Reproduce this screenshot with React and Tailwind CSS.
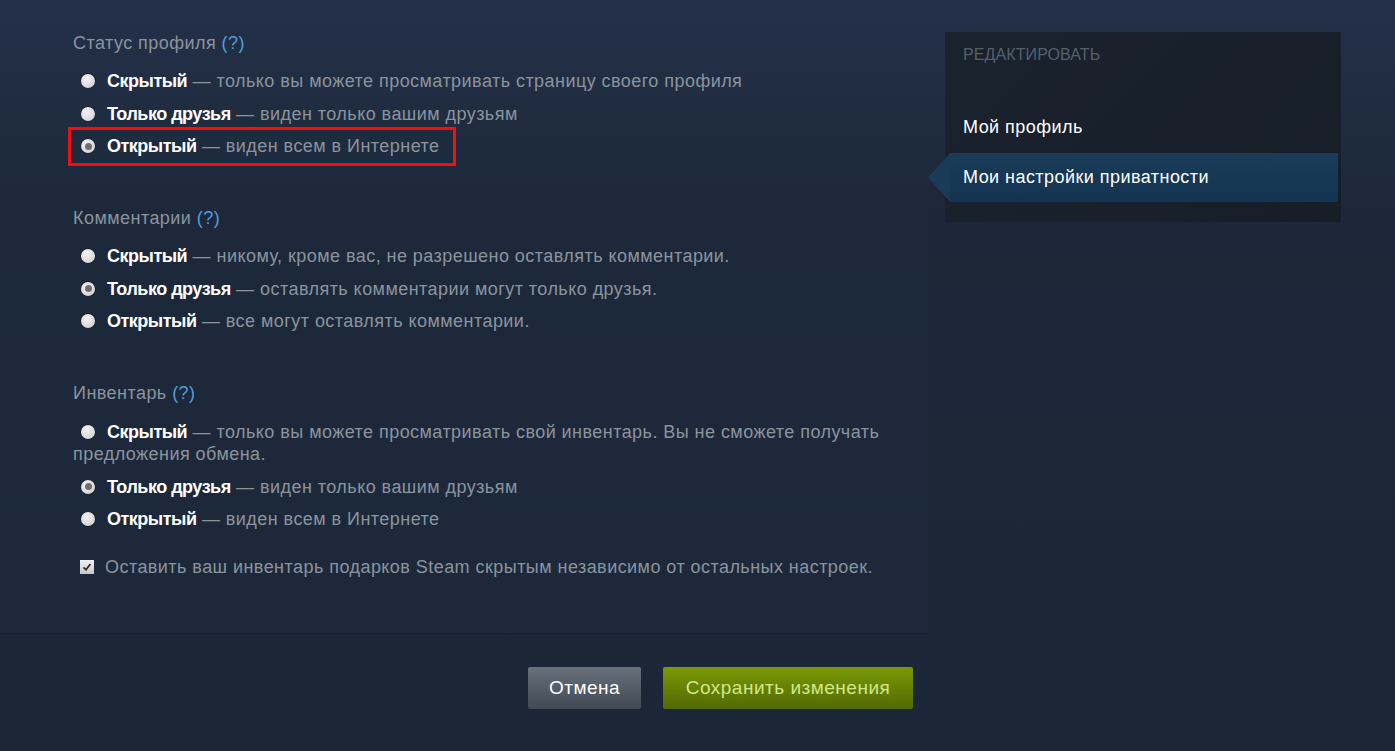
import React from 'react';

const sections = [
  {
    title: 'Статус профиля',
    options: [
      { label: 'Скрытый', desc: 'только вы можете просматривать страницу своего профиля' },
      { label: 'Только друзья', desc: 'виден только вашим друзьям' },
      { label: 'Открытый', desc: 'виден всем в Интернете', checked: true, marked: true },
    ],
  },
  {
    title: 'Комментарии',
    options: [
      { label: 'Скрытый', desc: 'никому, кроме вас, не разрешено оставлять комментарии.' },
      { label: 'Только друзья', desc: 'оставлять комментарии могут только друзья.', checked: true },
      { label: 'Открытый', desc: 'все могут оставлять комментарии.' },
    ],
  },
  {
    title: 'Инвентарь',
    options: [
      { label: 'Скрытый', desc: 'только вы можете просматривать свой инвентарь. Вы не сможете получать предложения обмена.' },
      { label: 'Только друзья', desc: 'виден только вашим друзьям', checked: true },
      { label: 'Открытый', desc: 'виден всем в Интернете' },
    ],
  },
];

function Radio({ checked }) {
  return (
    <span className="relative -top-[1px] ml-[8px] mr-[12px] inline-block h-[14px] w-[14px] rounded-full bg-[radial-gradient(circle_at_40%_35%,#f4f4f4,#cbcbcb)] align-middle shadow-[0_0_1px_#000]">
      {checked && <span className="absolute left-[3.5px] top-[3.5px] h-[7px] w-[7px] rounded-full bg-[#6f6f6f]" />}
    </span>
  );
}

function Option({ opt }) {
  return (
    <div className={opt.marked ? 'relative w-fit leading-[22px]' : 'leading-[22px]'}>
      <Radio checked={opt.checked} />
      <span className="font-bold tracking-[-0.5px] text-white">{opt.label}</span>
      <span className="text-[#8b949d]"> — {opt.desc}</span>
      {opt.marked && (
        <span className="absolute -top-[8px] -bottom-[9px] -left-[5px] -right-[17px] border-[3px] border-[#f20f0f]" />
      )}
    </div>
  );
}

export default function App() {
  return (
    <div className="min-h-[751px] bg-[linear-gradient(180deg,#233048_0px,#1c2839_220px,#1b2636_751px)] font-['Liberation_Sans',Arial,sans-serif] text-[18px] tracking-[0.45px]">
      <div className="flex pt-[32px]">
        {/* Left: privacy settings */}
        <div className="w-[928px] shrink-0">
          <div className="border-b border-[#18212d] bg-[linear-gradient(180deg,rgba(35,48,72,0)_0%,rgba(32,46,66,0.35)_100%)] pb-[55px] pl-[73px] pr-[25px]">
            <div className="w-[830px]">
              {sections.map((s, i) => (
                <div key={s.title} className={i === 0 ? '' : 'mt-[50px]'}>
                  <div className="leading-[22px] text-[#8b949d]">
                    {s.title} <span className="text-[#4d9fd9]">(?)</span>
                  </div>
                  <div className={i === 2 ? 'mt-[17px] flex flex-col gap-[10.5px]' : 'mt-[16px] flex flex-col gap-[10.5px]'}>
                    {s.options.map((opt) => (
                      <Option key={opt.label} opt={opt} />
                    ))}
                  </div>
                </div>
              ))}
              <div className="mt-[26px] flex items-center leading-[22px] text-[#8b949d]">
                <span className="ml-[7px] mr-[11px] flex h-[14px] w-[14px] shrink-0 items-center justify-center bg-[linear-gradient(180deg,#f0f0f0,#c8c8c8)]">
                  <svg viewBox="0 0 14 14" className="h-[12px] w-[12px]">
                    <path d="M3 7.5 L5.8 10.2 L11 3.5" fill="none" stroke="#2a2a2a" strokeWidth="2" />
                  </svg>
                </span>
                Оставить ваш инвентарь подарков Steam скрытым независимо от остальных настроек.
              </div>
            </div>
          </div>

          <div className="mt-[33px] flex justify-end gap-[22px] pr-[15px]">
            <button className="h-[42px] w-[113px] rounded-[2px] bg-[linear-gradient(180deg,#67707b,#424953)] text-[19px] tracking-[0.5px] text-white">
              Отмена
            </button>
            <button className="h-[42px] w-[250px] rounded-[2px] bg-[linear-gradient(180deg,#799905,#536904)] text-[19px] tracking-[0.5px] text-[#d2e885]">
              Сохранить изменения
            </button>
          </div>
        </div>

        {/* Right: sidebar */}
        <div className="ml-[17px] h-[190px] w-[396px] shrink-0 bg-[linear-gradient(135deg,#1a222e,#171e28)] pt-[13px]">
          <div className="pl-[18px] text-[16px] leading-[20px] tracking-[0.1px] uppercase text-[#56606c]">Редактировать</div>
          <div className="mt-[51px] pl-[18px] leading-[22px] text-white">Мой профиль</div>
          <div className="mt-[15px] ml-[-17px] flex h-[49px] w-[410px]">
            <div className="h-full w-[22px] bg-[#1a3b58] [clip-path:polygon(100%_0,100%_100%,0_50%)]" />
            <div className="flex flex-1 items-center bg-[linear-gradient(180deg,#1b3c59,#133450)] pl-[13px] text-white">
              Мои настройки приватности
            </div>
          </div>
        </div>
      </div>
    </div>
  );
}
